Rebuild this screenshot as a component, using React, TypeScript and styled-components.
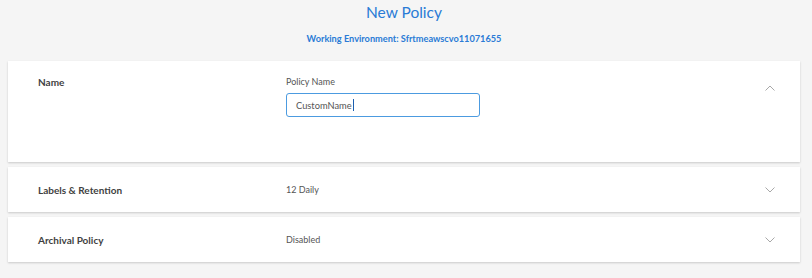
import React from 'react';
import styled, { createGlobalStyle } from 'styled-components';

const GlobalStyle = createGlobalStyle`
  body {
    margin: 0;
    background: #f5f5f5;
    font-family: Lato, "Open Sans", "Liberation Sans", sans-serif;
  }
`;

const Page = styled.div`
  width: 812px;
  height: 278px;
  box-sizing: border-box;
  padding: 0 12px 0 8px;
  display: flex;
  flex-direction: column;
`;

const Header = styled.div`
  display: flex;
  flex-direction: column;
  align-items: center;
  height: 61px;
  .title {
    margin-top: 2px;
    font-size: 15.5px;
    line-height: 20px;
    color: #2a7bd6;
  }
  .env {
    margin-top: 10px;
    font-size: 9.2px;
    font-weight: 700;
    line-height: 14px;
    color: #2a7bd6;
  }
`;

const Stack = styled.div`
  display: flex;
  flex-direction: column;
  gap: 5px;
`;

const Card = styled.div<{ $open?: boolean }>`
  background: #fff;
  box-shadow: 0 1px 2px rgba(0, 0, 0, 0.18);
  box-sizing: border-box;
  height: ${(p) => (p.$open ? '101px' : '45px')};
  padding: ${(p) => (p.$open ? '14px 25px 0 30px' : '0 25px 0 30px')};
  display: grid;
  grid-template-columns: 248px 1fr 10px;
  align-items: ${(p) => (p.$open ? 'start' : 'center')};
`;

const Label = styled.div`
  font-size: 10px;
  font-weight: 700;
  line-height: 14px;
  color: #3f3f3f;
`;

const Value = styled.div`
  font-size: 9px;
  line-height: 14px;
  color: #555;
`;

const Field = styled.div`
  display: flex;
  flex-direction: column;
  gap: 4px;
`;

const Input = styled.div`
  width: 194px;
  height: 24px;
  box-sizing: border-box;
  border: 1px solid #4c9be0;
  border-radius: 3px;
  padding-left: 9px;
  display: flex;
  align-items: center;
  font-size: 9.3px;
  color: #555;
  .caret {
    width: 1px;
    height: 12px;
    margin-left: 1px;
    background: #1c5fb0;
  }
`;

const Chevron = styled.svg<{ $open?: boolean }>`
  width: 10px;
  height: 6px;
  margin-top: ${(p) => (p.$open ? '10px' : '0')};
`;

const Arrow = ({ up }: { up?: boolean }) => (
  <Chevron $open={up} viewBox="0 0 10 6">
    <polyline
      points={up ? '0.5,5.5 5,1 9.5,5.5' : '0.5,0.5 5,5 9.5,0.5'}
      fill="none"
      stroke="#a8a8a8"
      strokeWidth="1"
    />
  </Chevron>
);

const App = () => {
  return (
    <Page>
      <GlobalStyle />
      <Header>
        <div className="title">New Policy</div>
        <div className="env">Working Environment: Sfrtmeawscvo11071655</div>
      </Header>
      <Stack>
        <Card $open>
          <Label>Name</Label>
          <Field>
            <Value>Policy Name</Value>
            <Input>
              CustomName
              <span className="caret" />
            </Input>
          </Field>
          <Arrow up />
        </Card>
        <Card>
          <Label>Labels &amp; Retention</Label>
          <Value>12 Daily</Value>
          <Arrow />
        </Card>
        <Card>
          <Label>Archival Policy</Label>
          <Value>Disabled</Value>
          <Arrow />
        </Card>
      </Stack>
    </Page>
  );
};

export default App;
